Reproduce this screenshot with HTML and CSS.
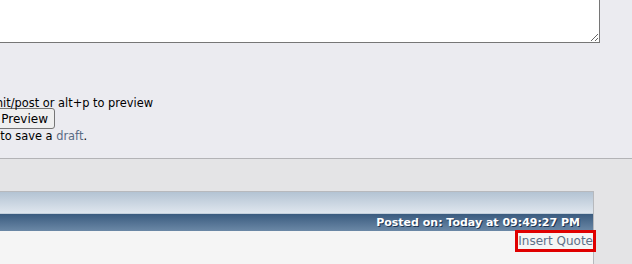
FILE: index.html
```html
<!DOCTYPE html>
<html>
<head>
<meta charset="utf-8">
<link rel="stylesheet" href="styles.css">
</head>
<body>
<div class="editor">
  <textarea class="message"></textarea>
  <div class="shortcuts">
    <p class="hint line1">Shortcuts: alt+s to submit/post or alt+p to preview</p>
    <div class="buttons"><button class="btn">Post</button><button class="btn">Preview</button></div>
    <p class="hint line3">Use alt+d to save a <a href="#" class="link">draft</a>.</p>
  </div>
</div>
<div class="history">
  <div class="post">
    <div class="cat"></div>
    <div class="title"><span class="posted">Posted on: Today at 09:49:27 PM</span></div>
    <div class="body"><a href="#" class="quote">Insert Quote</a></div>
  </div>
</div>
</body>
</html>
```
FILE: styles.css
```css
html, body { margin: 0; padding: 0; }
body {
  width: 632px;
  height: 264px;
  overflow: hidden;
  font-family: "DejaVu Sans", Verdana, sans-serif;
  font-size: 12px;
  color: #000;
  background: #e4e4e6;
}
.editor {
  background: #ebebf0;
  border-bottom: 1px solid #b3b3b6;
  box-sizing: border-box;
  height: 159px;
}
.message {
  display: block;
  box-sizing: border-box;
  width: 600px;
  height: 43px;
  margin: 0;
  border: 1px solid #767676;
  border-top: none;
  border-left: none;
  background: #fff;
  resize: both;
  padding: 0;
}
.shortcuts {
  margin-left: -266px;
  padding-top: 52px;
  width: 500px;
}
.hint {
  margin: 0;
  line-height: 16px;
  font-size: 11.4px;
  white-space: nowrap;
}
.line1 { text-align: right; width: 419px; position: relative; z-index: 1; }
.buttons {
  display: flex;
  justify-content: flex-end;
  width: 321px;
  gap: 4px;
  height: 21px;
  margin-top: -3px;
}
.btn {
  font-family: "DejaVu Sans", Verdana, sans-serif;
  font-size: 12px;
  height: 21px;
  padding: 0 6px;
  border: 1px solid #767676;
  border-radius: 3px;
  background: #efefef;
  color: #000;
  line-height: 18px;
}
.line3 { width: 353px; text-align: right; line-height: 14px; margin-top: 0; }
.link { color: #5a6c85; text-decoration: none; }
.history { padding-top: 32px; }
.post {
  width: 594px;
  box-sizing: border-box;
  border: 1px solid #b7b9bd;
  border-left: none;
  background: #f5f5f5;
  height: 80px;
}
.cat {
  height: 21px;
  background: linear-gradient(#b3c3d3, #dfe6ee);
  border-bottom: 1px solid #c4d0dc;
}
.title {
  height: 17px;
  background: linear-gradient(#3a5b7f, #6b88a6);
  display: flex;
  justify-content: flex-end;
  align-items: center;
  padding-right: 13px;
}
.posted {
  color: #fff;
  font-weight: bold;
  font-size: 11px;
  text-shadow: 1px 1px 0 #1e3552;
}
.body {
  display: flex;
  justify-content: flex-end;
  padding-top: 2px;
}
.quote {
  color: #5e7088;
  text-decoration: none;
  font-size: 12px;
  line-height: 16px;
  outline: 3px solid #e00000;
  margin-right: 0;
}
```
